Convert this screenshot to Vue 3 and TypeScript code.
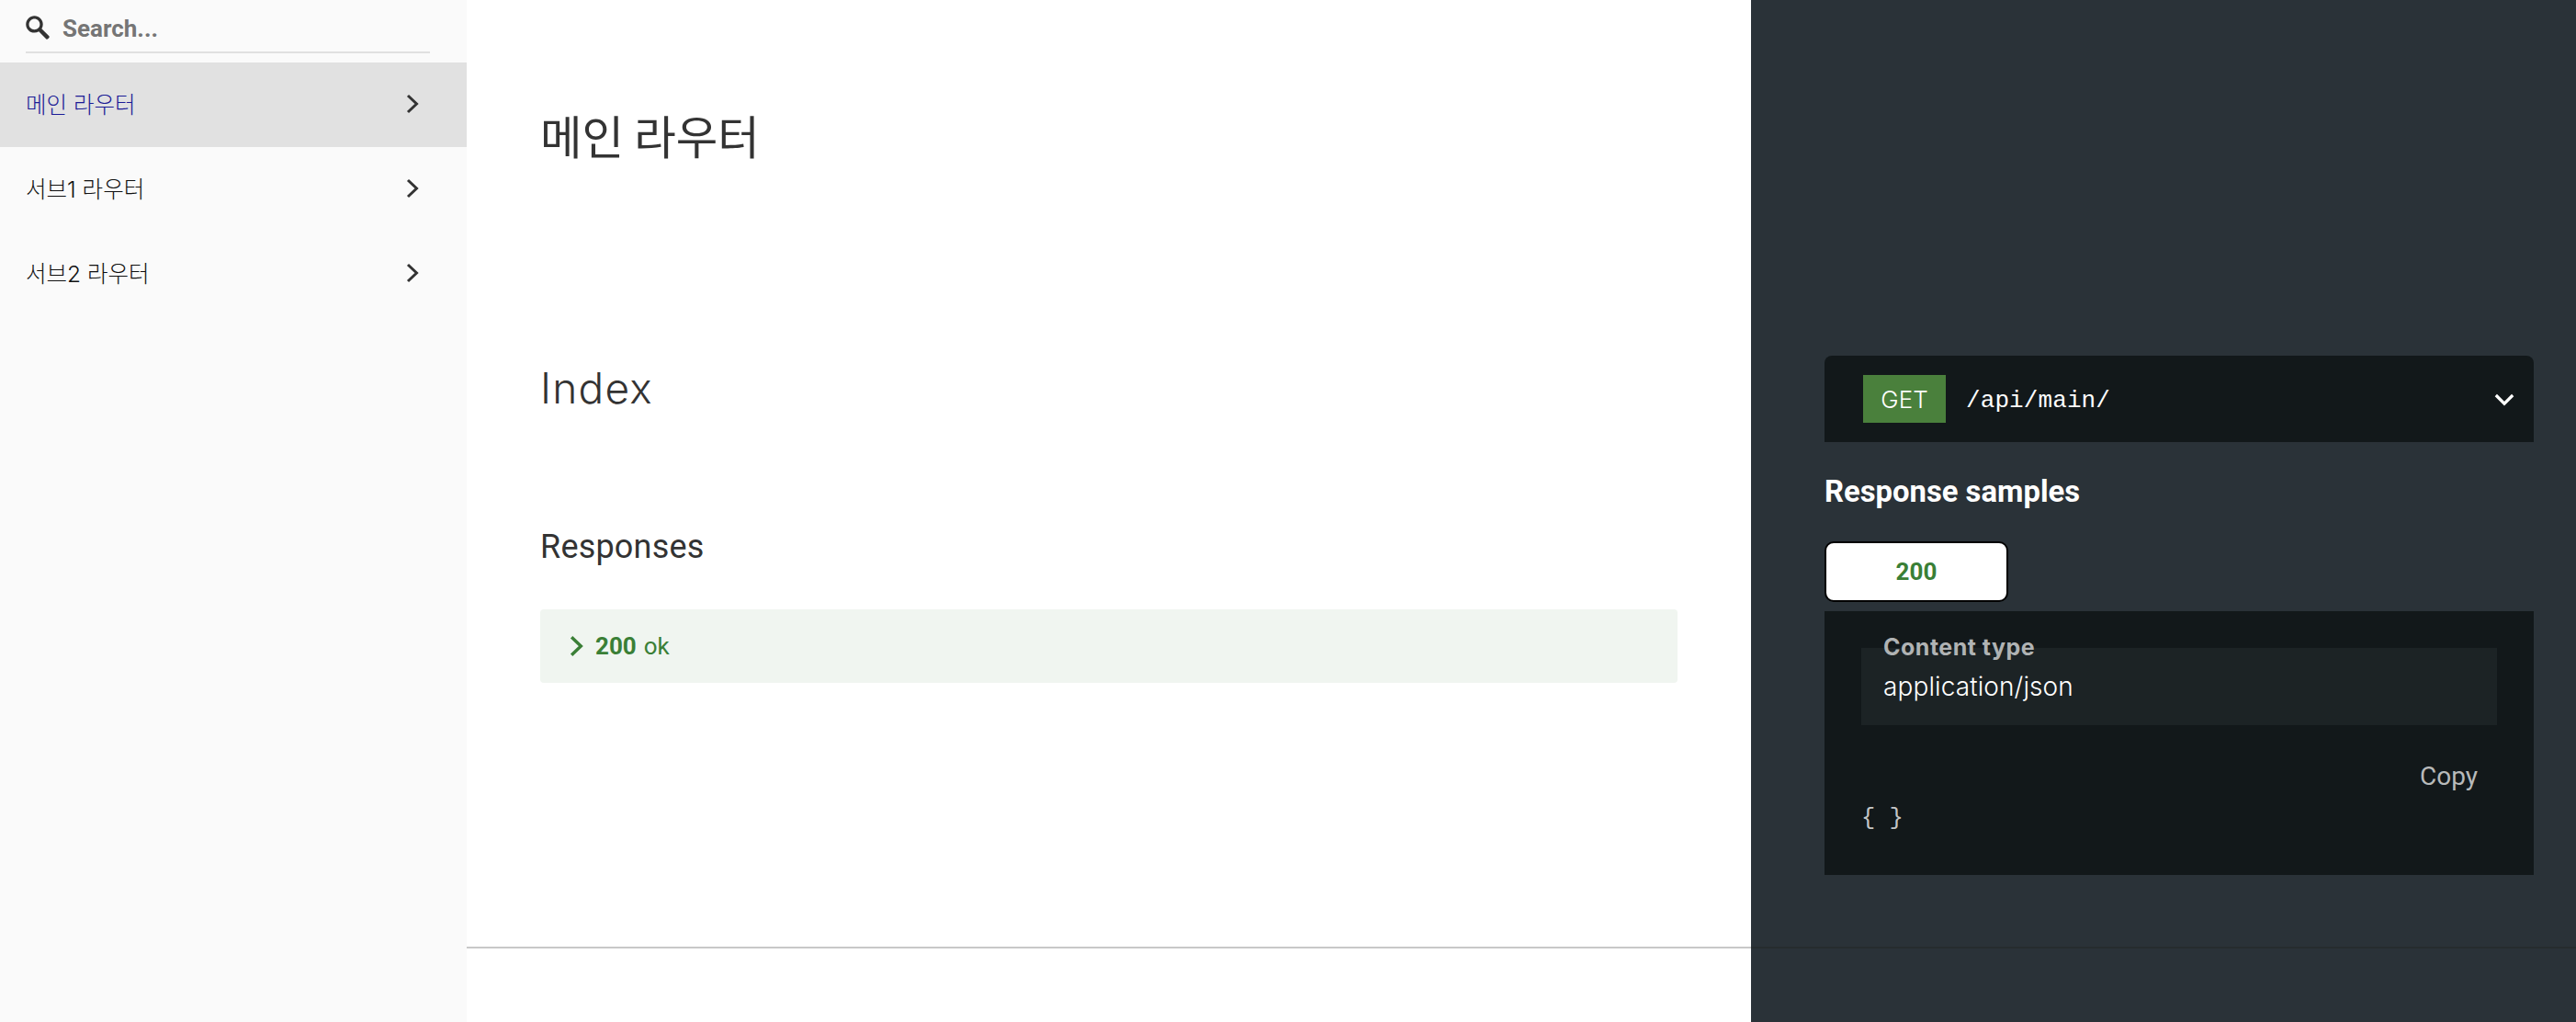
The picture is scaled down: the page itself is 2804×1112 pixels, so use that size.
<template>
  <div class="page">
    <aside class="sidebar">
      <div class="search">
        <svg class="search-icon" viewBox="0 0 1000 1000">
          <path d="M968.2,849.4L667.3,549c83.9-136.5,66.7-317.4-51.7-435.6C477.1-25,252.5-25,113.9,113.4c-138.5,138.3-138.5,362.6,0,501C219.2,730.1,413.2,743,547.6,666.5l301.9,301.4c43.6,43.6,76.9,14.9,104.2-12.4C981,928.3,1011.8,893,968.2,849.4z M524.5,522c-88.9,88.7-233,88.7-321.8,0c-88.9-88.7-88.9-232.6,0-321.3c88.9-88.7,233-88.7,321.8,0C613.4,289.4,613.4,433.3,524.5,522z" />
        </svg>
        <span class="search-text">Search...</span>
      </div>
      <ul class="menu">
        <li v-for="(item, index) in menu" :key="item" class="menu-item" :class="{ active: index === 0 }">
          <span class="menu-label">{{ item }}</span>
          <svg class="menu-arrow" viewBox="0 0 14 22">
            <polyline points="2,2 11.5,11 2,20" />
          </svg>
        </li>
      </ul>
    </aside>

    <main class="content">
      <section class="middle">
        <h1 class="title">메인 라우터</h1>
        <h2 class="operation">Index</h2>
        <h3 class="responses-title">Responses</h3>
        <div class="response-row">
          <svg class="response-arrow" viewBox="0 0 14 22">
            <polyline points="2,2 11.5,11 2,20" />
          </svg>
          <strong>200</strong>
          <span>ok</span>
        </div>
      </section>

      <section class="right">
        <div class="endpoint">
          <span class="method">GET</span>
          <span class="path">/api/main/</span>
          <svg class="endpoint-arrow" viewBox="0 0 24 16">
            <polyline points="2,2 12,12 22,2" />
          </svg>
        </div>
        <h3 class="samples-title">Response samples</h3>
        <div class="tab">200</div>
        <div class="sample">
          <div class="select">
            <span class="select-label">Content type</span>
            <span class="select-value">application/json</span>
          </div>
          <div class="copy">Copy</div>
          <div class="code">{ }</div>
        </div>
      </section>

      <div class="middle-rest"></div>
      <div class="right-rest"></div>
    </main>
  </div>
</template>

<script setup lang="ts">
const menu: string[] = ['메인 라우터', '서브1 라우터', '서브2 라우터']
</script>

<style>
html,
body {
  margin: 0;
  background: #fff;
}
</style>

<style scoped>
.page {
  display: flex;
  height: 1112px;
  overflow: hidden;
  font-family: Roboto, "Noto Sans CJK KR", sans-serif;
  color: #333;
}

.sidebar {
  width: 508px;
  flex: none;
  background: #fafafa;
}
.search {
  display: flex;
  align-items: center;
  height: 52px;
  padding-top: 4px;
  margin: 0 40px 10px 28px;
  border-bottom: 2px solid #e0e0e0;
}
.search-icon {
  width: 26px;
  height: 26px;
  fill: #333;
  margin-right: 14px;
}
.search-text {
  padding-top: 1px;
  font-size: 26px;
  font-weight: 700;
  color: #757575;
}
.menu {
  list-style: none;
  margin: 0;
  padding: 0;
}
.menu-item {
  display: flex;
  align-items: center;
  justify-content: space-between;
  box-sizing: border-box;
  height: 92px;
  padding: 0 52px 2px 28px;
  font-family: Inter, "Noto Sans CJK KR", sans-serif;
  font-size: 24.5px;
  font-weight: 300;
  color: #111;
}
.menu-item.active {
  background: #e1e1e1;
  color: #1c1c96;
}
.menu-label {
  margin-bottom: 2px;
}
.menu-arrow {
  width: 14px;
  height: 22px;
  fill: none;
  stroke: #333;
  stroke-width: 3;
}

.content {
  flex: 1;
  display: grid;
  grid-template-columns: 1398px 898px;
  grid-template-rows: 1032px 80px;
}
.middle {
  padding: 115px 80px 0;
  border-bottom: 2px solid #c8c8c8;
}
.title {
  margin: 0;
  font-family: "Noto Sans CJK KR", sans-serif;
  font-size: 49.5px;
  font-weight: 400;
  line-height: 64px;
  color: #333;
}
.operation {
  margin: 211px 0 0;
  font-family: Inter, sans-serif;
  font-size: 46px;
  font-weight: 300;
  letter-spacing: 1.2px;
  line-height: 64px;
  color: #333;
}
.responses-title {
  margin: 117px 0 0;
  font-size: 36px;
  font-weight: 400;
  letter-spacing: 0.2px;
  line-height: 48px;
  color: #333;
}
.response-row {
  display: flex;
  align-items: center;
  height: 80px;
  margin-top: 44px;
  padding-left: 32px;
  border-radius: 4px;
  background: #f0f5f0;
  color: #3a7f36;
  font-size: 26px;
}
.response-row strong {
  margin-right: 8px;
}
.response-arrow {
  width: 15px;
  height: 24px;
  margin-right: 13px;
  fill: none;
  stroke: #3a7f36;
  stroke-width: 3.2;
}

.right {
  padding: 387px 46px 0 80px;
  background: #2a3238;
  border-bottom: 2px solid #262c2e;
}
.endpoint {
  display: flex;
  align-items: center;
  height: 94px;
  padding: 0 21px 0 42px;
  border-radius: 8px 8px 0 0;
  background: #12181a;
}
.method {
  width: 90px;
  height: 52px;
  line-height: 54px;
  text-align: center;
  background: #4a803c;
  color: #fff;
  font-family: Inter, sans-serif;
  font-size: 26px;
  font-weight: 300;
}
.path {
  flex: 1;
  margin-left: 22px;
  padding-top: 3px;
  font-family: "Liberation Mono", monospace;
  font-size: 26px;
  letter-spacing: 0.1px;
  color: #fff;
}
.endpoint-arrow {
  width: 22px;
  height: 15px;
  margin-top: 2px;
  fill: none;
  stroke: #fff;
  stroke-width: 3.5;
}
.samples-title {
  margin: 30px 0 0;
  font-size: 32.8px;
  font-weight: 700;
  line-height: 48px;
  color: #fff;
}
.tab {
  box-sizing: border-box;
  width: 200px;
  height: 66px;
  line-height: 62px;
  margin-top: 30px;
  text-align: center;
  background: #fff;
  border: 2px solid #000;
  border-radius: 10px;
  color: #3a7f36;
  font-size: 26px;
  font-weight: 700;
}
.sample {
  height: 287px;
  margin-top: 10px;
  padding: 40px 40px 0;
  box-sizing: border-box;
  background: #12181a;
}
.select {
  position: relative;
  height: 84px;
  padding: 25px 0 0 24px;
  box-sizing: border-box;
  background: #1c2325;
}
.select-label {
  position: absolute;
  left: 24px;
  top: -16px;
  font-family: Inter, sans-serif;
  font-size: 25px;
  font-weight: 700;
  letter-spacing: 0.5px;
  color: #b0b3b4;
}
.select-value {
  font-family: Inter, sans-serif;
  font-size: 28px;
  font-weight: 300;
  letter-spacing: 0.1px;
  color: #fff;
}
.copy {
  margin-top: 38px;
  padding-right: 21px;
  text-align: right;
  font-size: 28px;
  line-height: 36px;
  color: #b8baba;
}
.code {
  margin-top: 10px;
  font-family: "Liberation Mono", monospace;
  font-size: 25.5px;
  line-height: 36px;
  color: #c4c6c6;
}

.middle-rest {
  background: #fff;
}
.right-rest {
  background: #2a3238;
}
</style>
